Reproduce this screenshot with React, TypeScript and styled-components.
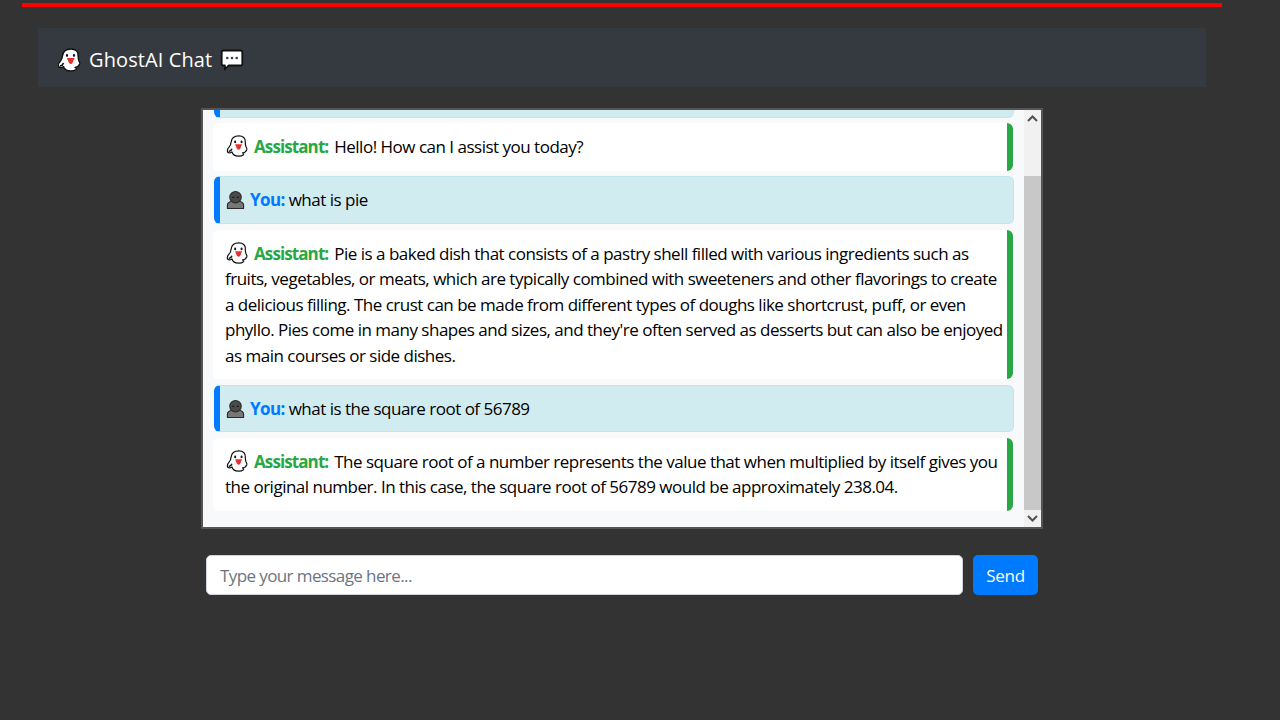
import { useEffect, useRef } from 'react';
import styled, { createGlobalStyle } from 'styled-components';

const FONT = `"Open Sans", "Noto Sans", sans-serif`;

const GhostIcon = ({ size }: { size: number }) => (
  <svg width={size} height={size} viewBox="0 0 24 24">
    <path
      d="M14 1C9 1 6 3.800 5.500 8c-.2 2-.5 3.500-2 5C2 14.500 1 16 1.500 18c.5 2 3 2 5 .5 1 3 3.500 4.500 7 4.500 2.500 0 4.500-.5 5.500-1.500.8-1 0-1.700-1-2 2-.2 3.800-1.500 4.700-3.500.4-1.500-.5-2.500-1-3.500-.6-1.500-.5-3.500-.7-5C21.500 3.500 18.500 1 14 1z"
      fill="#fff"
      stroke="#111"
      strokeWidth="1.300"
      strokeLinejoin="round"
    />
    <ellipse cx="10" cy="7.500" rx="1.100" ry="1.400" fill="#111" />
    <ellipse cx="17" cy="7.500" rx="1.100" ry="1.400" fill="#111" />
    <path d="M10 10h7.500c0 1-.4 1.600-1 2-.2 2.300-1.300 4-2.700 4s-2.600-1.700-2.900-4c-.6-.4-.9-1-.9-2z" fill="#e8302a" />
    <path d="M3 18c1.800-.3 3-1.200 3.500-3" fill="none" stroke="#111" strokeWidth="1.600" />
  </svg>
);

const BalloonIcon = () => (
  <svg width={24} height={24} viewBox="0 0 24 24">
    <path
      d="M3.500 2.500h17c1 0 1.800.8 1.800 1.800v11.400c0 1-.8 1.800-1.800 1.800H8.500l-3.600 4v-4H3.500c-1 0-1.800-.8-1.800-1.800V4.300c0-1 .8-1.800 1.800-1.800z"
      fill="#fff"
      stroke="#111"
      strokeWidth="1.800"
      strokeLinejoin="round"
    />
    <circle cx="7.300" cy="10" r="1.300" fill="#3a4450" />
    <circle cx="12" cy="10" r="1.300" fill="#3a4450" />
    <circle cx="16.700" cy="10" r="1.300" fill="#3a4450" />
  </svg>
);

const BustIcon = () => (
  <svg width={19} height={20} viewBox="0 0 20 20">
    <path
      d="M1.500 19v-3.500c0-2.600 2.400-3.800 5.200-4.400h6.600c2.800.6 5.200 1.800 5.200 4.400V19z"
      fill="#777"
      stroke="#2c2c2c"
      strokeWidth="1.200"
      strokeLinejoin="round"
    />
    <circle cx="10" cy="7" r="6" fill="#4a4a4a" stroke="#2c2c2c" strokeWidth="1.200" />
    <path d="M6.500 7.200h2.200M11.300 7.200h2.200" stroke="#1c1c1c" strokeWidth="1.200" />
  </svg>
);

const ArrowIcon = ({ up }: { up?: boolean }) => (
  <svg width={11} height={7} viewBox="0 0 11 7">
    <path d={up ? 'M1 6l4.500-4.500L10 6' : 'M1 1l4.500 4.500L10 1'} fill="none" stroke="#505050" strokeWidth="2" />
  </svg>
);

const GlobalStyle = createGlobalStyle`
  html, body {
    margin: 0;
    height: 100%;
    background: #333;
  }
  * {
    box-sizing: border-box;
  }
`;

const Wrapper = styled.div`
  width: 1200px;
  margin: 3px 0 0 22px;
  padding: 21px 16px 0;
  border-top: 4px solid #f00;
  font-family: ${FONT};
`;

const NavBar = styled.header`
  height: 59px;
  padding: 4px 19px 0;
  background: #343a40;
  display: flex;
  align-items: center;
  gap: 8px;
`;

const Title = styled.h1`
  margin: 0;
  font-size: 20px;
  font-weight: 400;
  letter-spacing: 0.100px;
  color: #fff;
`;

const ChatBox = styled.div`
  width: 842px;
  height: 421px;
  margin: 21px auto 0;
  border: 2px solid #555;
  background: #f8f9fa;
  display: flex;
`;

const Scroller = styled.div`
  flex: 1;
  padding: 10px 10px 10px;
  overflow-y: auto;
  scrollbar-width: none;
`;

const ScrollBar = styled.div`
  width: 17px;
  background: #f1f1f1;
  display: flex;
  flex-direction: column;
`;

const ScrollButton = styled.div`
  height: 17px;
  flex: none;
  display: flex;
  align-items: center;
  justify-content: center;
`;

const ScrollTrack = styled.div`
  flex: 1;
  display: flex;
  flex-direction: column;
  justify-content: flex-end;
`;

const ScrollThumb = styled.div`
  height: 334px;
  background: #c8c8c8;
`;

const Message = styled.div<{ $from: 'user' | 'assistant' }>`
  margin-bottom: 5.700px;
  border-radius: 6px;
  font-size: 17px;
  line-height: 25.500px;
  letter-spacing: -0.500px;
  color: #000;
  ${p =>
    p.$from === 'user'
      ? `
    margin-left: 1px;
    padding: 10px 11px 10px 5px;
    background: #d1ecf1;
    border: 1px solid #bee5eb;
    border-left: 6px solid #007bff;
  `
      : `
    margin-right: 1px;
    padding: 11px 0 11px 12px;
    background: #fff;
    border-right: 6px solid #28a745;
    box-shadow: 1px 0 0 #fff;
  `}

  svg {
    vertical-align: -4px;
    margin: 0 ${p => (p.$from === 'user' ? '5px' : '6px')} 0 1px;
  }
`;

const Speaker = styled.strong<{ $from: 'user' | 'assistant' }>`
  font-weight: 700;
  letter-spacing: ${p => (p.$from === 'user' ? '-0.600px' : '-0.900px')};
  margin-right: ${p => (p.$from === 'user' ? '0' : '2px')};
  color: ${p => (p.$from === 'user' ? '#007bff' : '#28a745')};
`;

const InputRow = styled.form`
  width: 832px;
  margin: 26px auto 0;
  display: flex;
  gap: 10px;
`;

const MessageInput = styled.input`
  flex: 1;
  height: 40px;
  padding: 0 13px;
  border: 1px solid #ced4da;
  border-radius: 5px;
  background: #fff;
  font-family: ${FONT};
  font-size: 17px;
  letter-spacing: -0.600px;
  color: #000;

  &::placeholder {
    color: #6c757d;
    opacity: 1;
  }
`;

const SendButton = styled.button`
  width: 65px;
  height: 40px;
  border: none;
  border-radius: 5px;
  background: #007bff;
  color: #fff;
  font-family: ${FONT};
  font-size: 17px;
  letter-spacing: -0.300px;
`;

type ChatMessage = { from: 'user' | 'assistant'; text: string };

const messages: ChatMessage[] = [
  { from: 'user', text: 'hello' },
  { from: 'assistant', text: 'Hello! How can I assist you today?' },
  { from: 'user', text: 'what is pie' },
  {
    from: 'assistant',
    text: "Pie is a baked dish that consists of a pastry shell filled with various ingredients such as fruits, vegetables, or meats, which are typically combined with sweeteners and other flavorings to create a delicious filling. The crust can be made from different types of doughs like shortcrust, puff, or even phyllo. Pies come in many shapes and sizes, and they're often served as desserts but can also be enjoyed as main courses or side dishes.",
  },
  { from: 'user', text: 'what is the square root of 56789' },
  {
    from: 'assistant',
    text: 'The square root of a number represents the value that when multiplied by itself gives you the original number. In this case, the square root of 56789 would be approximately 238.04.',
  },
];

const App = () => {
  const box = useRef<HTMLDivElement>(null);

  useEffect(() => {
    if (box.current) {
      box.current.scrollTop = box.current.scrollHeight;
    }
  }, []);

  return (
    <>
      <GlobalStyle />
      <Wrapper>
        <NavBar>
          <GhostIcon size={24} />
          <Title>GhostAI Chat</Title>
          <BalloonIcon />
        </NavBar>
        <ChatBox>
          <Scroller ref={box}>
            {messages.map(({ from, text }, i) => (
              <Message key={i} $from={from}>
                {from === 'user' ? <BustIcon /> : <GhostIcon size={22} />}
                <Speaker $from={from}>{from === 'user' ? 'You:' : 'Assistant:'}</Speaker> {text}
              </Message>
            ))}
          </Scroller>
          <ScrollBar>
            <ScrollButton>
              <ArrowIcon up />
            </ScrollButton>
            <ScrollTrack>
              <ScrollThumb />
            </ScrollTrack>
            <ScrollButton>
              <ArrowIcon />
            </ScrollButton>
          </ScrollBar>
        </ChatBox>
        <InputRow onSubmit={e => e.preventDefault()}>
          <MessageInput placeholder="Type your message here..." />
          <SendButton type="submit">Send</SendButton>
        </InputRow>
      </Wrapper>
    </>
  );
};

export default App;
